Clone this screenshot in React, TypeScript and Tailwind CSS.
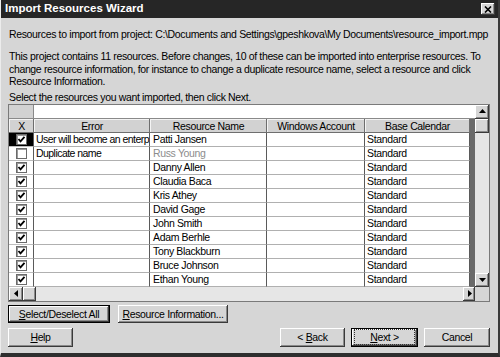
import React from 'react';

interface Row {
  checked: boolean;
  error?: string;
  name: string;
  dim?: boolean;
  selected?: boolean;
}

const rows: Row[] = [
  { checked: true, error: 'User will become an enterp', name: 'Patti Jansen', selected: true },
  { checked: false, error: 'Duplicate name', name: 'Russ Young', dim: true },
  { checked: true, name: 'Danny Allen' },
  { checked: true, name: 'Claudia Baca' },
  { checked: true, name: 'Kris Athey' },
  { checked: true, name: 'David Gage' },
  { checked: true, name: 'John Smith' },
  { checked: true, name: 'Adam Berhle' },
  { checked: true, name: 'Tony Blackburn' },
  { checked: true, name: 'Bruce Johnson' },
  { checked: true, name: 'Ethan Young' },
];

const raised =
  'shadow-[inset_-1px_-1px_#3a3a3a,inset_1px_1px_#ffffff,inset_-2px_-2px_#8a8a8a]';

const CheckBox: React.FC<{ checked: boolean }> = ({ checked }) => (
  <div className="w-[11px] h-[11px] bg-white border border-[#6a6a6a] shadow-[inset_1px_1px_#9a9a9a] flex items-center justify-center">
    {checked && (
      <svg width="9" height="9" viewBox="0 0 9 9">
        <path d="M1.5 4 L3.5 6.3 L7.5 1.8" fill="none" stroke="#000" strokeWidth="1.8" />
      </svg>
    )}
  </div>
);

const Arrow: React.FC<{ dir: 'up' | 'down' | 'left' | 'right' }> = ({ dir }) => {
  const pts = {
    up: '1,6 4.5,2 8,6',
    down: '1,3 4.5,7 8,3',
    left: '6,1 2,4.5 6,8',
    right: '3,1 7,4.5 3,8',
  }[dir];
  return (
    <svg width="9" height="9" viewBox="0 0 9 9">
      <polygon points={pts} fill="#000" />
    </svg>
  );
};

const Btn: React.FC<{ w: string; def?: boolean; focus?: boolean; children: React.ReactNode }> = ({ w, def, focus, children }) => (
  <div className={`${w} h-full ${def ? 'border border-black' : ''} bg-[#d6d6d6] flex`}>
    <div className={`flex-1 flex items-center justify-center ${raised}`}>
      <div
        className={`leading-[12px] whitespace-nowrap ${
          focus ? 'outline outline-1 outline-dotted outline-[#333] outline-offset-[1px] px-[14px]' : 'px-[3px]'
        }`}
      >
        {children}
      </div>
    </div>
  </div>
);

export default function App() {
  return (
    <div
      className="w-[500px] h-[357px] bg-[#d6d6d6] flex flex-col text-[10.5px] tracking-[-0.35px] text-black border-l border-l-[#ececec] border-r-2 border-r-[#3a3a3a] border-b-[4px] border-b-[#2e2e2e] overflow-hidden"
      style={{ fontFamily: '"Liberation Sans", Arial, sans-serif' }}
    >
      {/* title bar */}
      <div className="h-[18px] bg-[#262626] flex items-center justify-between pl-[4px] pr-[3px]">
        <span className="text-white font-bold text-[11.5px] tracking-[0px]">Import Resources Wizard</span>
        <div className={`w-[14px] h-[12px] bg-[#d6d6d6] flex items-center justify-center ${raised}`}>
          <svg width="8" height="7" viewBox="0 0 8 7">
            <path d="M1 0.5 L7 6.5 M7 0.5 L1 6.5" stroke="#000" strokeWidth="1.6" />
          </svg>
        </div>
      </div>

      <div className="flex flex-col pl-[7px] pr-[8px]">
        <div className="mt-[10px] h-[13px] leading-[13px] pl-[1px] whitespace-nowrap">
          Resources to import from project: C:\Documents and Settings\gpeshkova\My Documents\resource_import.mpp
        </div>
        <div className="mt-[9px] leading-[12.5px] pl-[1px] whitespace-nowrap">
          This project contains 11 resources. Before changes, 10 of these can be imported into enterprise resources. To
          <br />
          change resource information, for instance to change a duplicate resource name, select a resource and click
          <br />
          Resource Information.
        </div>
        <div className="mt-[3px] h-[13px] leading-[13px] pl-[1px] whitespace-nowrap">
          Select the resources you want imported, then click Next.
        </div>

        {/* grid */}
        <div className="flex border border-[#7a7a7a] bg-[#d6d6d6]">
          <div className="w-[466px] flex flex-col">
            <div className="h-[14px] flex">
              <div className="w-[25px] bg-[#d2d2d2] border-r border-b border-[#8a8a8a]" />
              <div className="flex-1 bg-white border-b border-[#8a8a8a]" />
            </div>
            <div className="h-[14px] flex">
              {[
                ['w-[25px]', 'X'],
                ['w-[116px]', 'Error'],
                ['w-[117px]', 'Resource Name'],
                ['w-[98px]', 'Windows Account'],
                ['w-[105px]', 'Base Calendar'],
              ].map(([w, t]) => (
                <div
                  key={t}
                  className={`${w} bg-[#d2d2d2] flex items-center justify-center leading-[12px] shadow-[inset_-1px_-1px_#6e6e6e,inset_1px_1px_#f4f4f4]`}
                >
                  {t}
                </div>
              ))}
              <div className="flex-1 bg-[#6a6a6a]" />
            </div>
            {rows.map((r) => (
              <div key={r.name} className="h-[14px] flex">
                <div
                  className={`w-[25px] flex items-center justify-center border-r border-[#5a5a5a] border-b border-b-[#bdbdbd] ${
                    r.selected ? 'bg-black' : 'bg-white border-b-dotted'
                  }`}
                >
                  <CheckBox checked={r.checked} />
                </div>
                <div className="w-[116px] bg-white pl-[2px] leading-[13px] tracking-[-0.55px] whitespace-nowrap overflow-hidden border-r border-r-[#5a5a5a] border-b border-b-[#b0b0b0] border-b-dotted">
                  {r.error}
                </div>
                <div
                  className={`w-[117px] bg-white pl-[3px] leading-[13px] whitespace-nowrap border-r border-r-[#5a5a5a] border-b border-b-[#b0b0b0] border-b-dotted ${
                    r.dim ? 'text-[#8c8c8c]' : ''
                  }`}
                >
                  {r.name}
                </div>
                <div className="w-[98px] bg-white border-r border-r-[#5a5a5a] border-b border-b-[#b0b0b0] border-b-dotted" />
                <div className="w-[105px] bg-white pl-[2px] leading-[13px] border-r border-r-[#5a5a5a] border-b border-b-[#b0b0b0] border-b-dotted">
                  Standard
                </div>
                <div className="flex-1 bg-[#6a6a6a]" />
              </div>
            ))}
            {/* horizontal scrollbar */}
            <div className="h-[14px] flex bg-[#e6e6e6]">
              <div className={`w-[14px] bg-[#d6d6d6] flex items-center justify-center ${raised}`}>
                <Arrow dir="left" />
              </div>
              <div className={`w-[13px] bg-[#d6d6d6] ${raised}`} />
              <div className="flex-1" />
              <div className={`w-[12px] bg-[#d6d6d6] flex items-center justify-center ${raised}`}>
                <Arrow dir="right" />
              </div>
            </div>
          </div>
          {/* vertical scrollbar */}
          <div className="flex-1 flex flex-col">
            <div className="flex-1 flex flex-col bg-[#e6e6e6]">
              <div className={`h-[14px] bg-[#d6d6d6] flex items-center justify-center ${raised}`}>
                <Arrow dir="up" />
              </div>
              <div className={`h-[14px] bg-[#d6d6d6] ${raised}`} />
              <div className="flex-1" />
              <div className={`h-[14px] bg-[#d6d6d6] flex items-center justify-center ${raised}`}>
                <Arrow dir="down" />
              </div>
            </div>
            <div className="h-[14px] bg-[#d6d6d6]" />
          </div>
        </div>

        {/* buttons */}
        <div className="mt-[3px] h-[18px] flex gap-[8px]">
          <Btn w="w-[102px]" def>
            <span className="underline">S</span>elect/Deselect All
          </Btn>
          <Btn w="w-[110px]">
            <span className="underline">R</span>esource Information...
          </Btn>
        </div>
        <div className="mt-[5px] h-[19px] flex">
          <Btn w="w-[65px]">
            <span className="underline">H</span>elp
          </Btn>
          <div className="flex-1" />
          <div className="flex h-full gap-[6px]">
            <Btn w="w-[65px]">
              &lt; <span className="underline">B</span>ack
            </Btn>
            <Btn w="w-[67px]" def focus>
              <span className="underline">N</span>ext &gt;
            </Btn>
            <Btn w="w-[66px]">Cancel</Btn>
          </div>
        </div>
      </div>
    </div>
  );
}
